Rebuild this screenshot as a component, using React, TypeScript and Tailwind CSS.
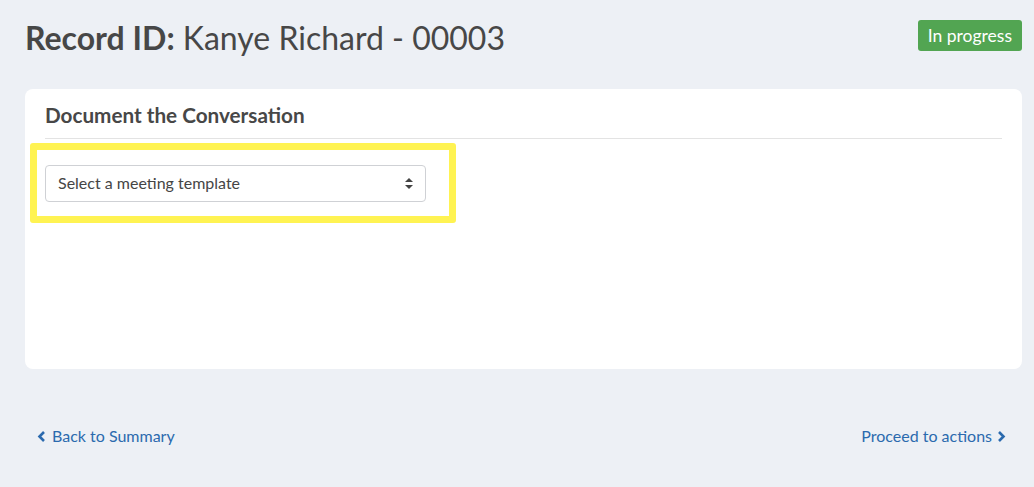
import React from "react";

export default function App() {
  return (
    <div
      className="min-h-[487px] w-full bg-[#edf0f5] pl-[25px] pr-[12px]"
      style={{ fontFamily: "Lato, 'Open Sans', sans-serif" }}
    >
      <div className="flex h-[78px] items-start justify-between">
        <h1 className="mt-[18px] text-[32px] leading-[40px] text-[#474747]">
          <span className="font-bold">Record ID:</span> Kanye Richard - 00003
        </h1>
        <span className="mt-[20px] rounded-[3px] bg-[#52a552] px-[10px] text-[17.5px] leading-[31px] text-white">
          In progress
        </span>
      </div>
      <div className="mt-[11px] h-[280px] rounded-[8px] bg-white px-[20px]">
        <div className="border-b border-[#e3e3e3]">
          <h2 className="pt-[13px] pb-[9px] text-[20.7px] font-bold leading-[27px] text-[#474747]">
            Document the Conversation
          </h2>
        </div>
        <div className="-ml-[15px] mt-[4px] flex h-[80px] w-[426px] items-center rounded-[3px] border-[7px] border-[#fff352] px-[8px]">
          <div className="flex h-[37px] w-[381px] items-center justify-between rounded-[4px] border border-[#cfd1d5] bg-white pl-[12px] pr-[12px]">
            <span className="text-[16px] text-[#454545]">Select a meeting template</span>
            <svg width="8" height="11" viewBox="0 0 8 11" fill="#444">
              <path d="M4 0 L8 4 L0 4 Z" />
              <path d="M0 7 L8 7 L4 11 Z" />
            </svg>
          </div>
        </div>
      </div>
      <div className="mt-[55px] flex items-center justify-between pl-[12px] pr-[16px] text-[16px] text-[#2b6aae]">
        <a className="flex items-center gap-[6px]">
          <svg width="9" height="11" viewBox="0 0 9 11" fill="none" stroke="#2b6aae" strokeWidth="2.6">
            <path d="M7 1 L2.5 5.5 L7 10" />
          </svg>
          Back to Summary
        </a>
        <a className="flex items-center gap-[5px]">
          Proceed to actions
          <svg width="9" height="11" viewBox="0 0 9 11" fill="none" stroke="#2b6aae" strokeWidth="2.6">
            <path d="M2 1 L6.5 5.5 L2 10" />
          </svg>
        </a>
      </div>
    </div>
  );
}
